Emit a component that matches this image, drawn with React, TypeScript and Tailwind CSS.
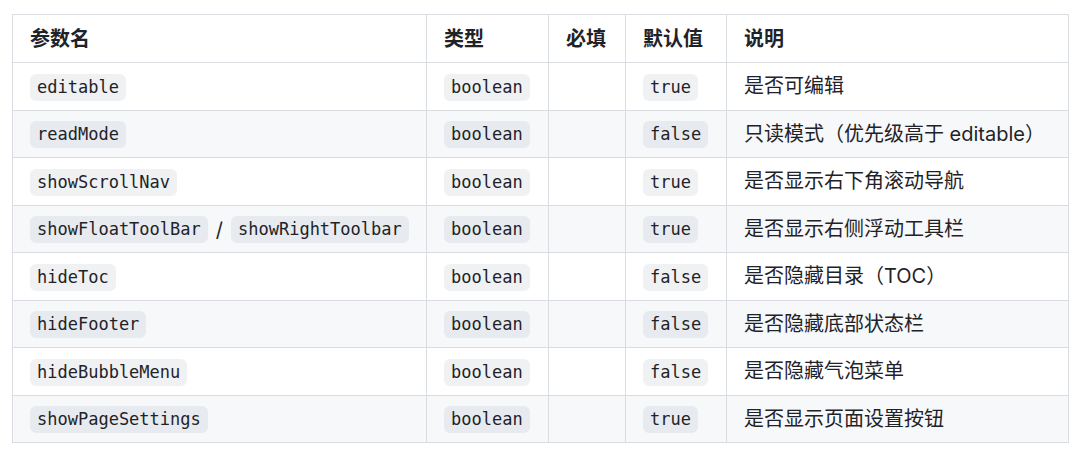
import React from "react";

/* =========================
   Data
   ========================= */
type Row = {
  names: string[];
  type: string;
  required: string;
  def: string;
  desc: string;
};

const rows: Row[] = [
  { names: ["editable"], type: "boolean", required: "", def: "true", desc: "是否可编辑" },
  { names: ["readMode"], type: "boolean", required: "", def: "false", desc: "只读模式（优先级高于 editable）" },
  { names: ["showScrollNav"], type: "boolean", required: "", def: "true", desc: "是否显示右下角滚动导航" },
  {
    names: ["showFloatToolBar", "showRightToolbar"],
    type: "boolean",
    required: "",
    def: "true",
    desc: "是否显示右侧浮动工具栏",
  },
  { names: ["hideToc"], type: "boolean", required: "", def: "false", desc: "是否隐藏目录（TOC）" },
  { names: ["hideFooter"], type: "boolean", required: "", def: "false", desc: "是否隐藏底部状态栏" },
  { names: ["hideBubbleMenu"], type: "boolean", required: "", def: "false", desc: "是否隐藏气泡菜单" },
  { names: ["showPageSettings"], type: "boolean", required: "", def: "true", desc: "是否显示页面设置按钮" },
];

/* =========================
   Inline code chip
   ========================= */
const Code: React.FC<{ children: React.ReactNode }> = ({ children }) => (
  <code className="inline-block rounded-[6px] bg-[#afb8c133] px-[7px] py-[1px] font-['DejaVu_Sans_Mono',monospace] text-[17px] leading-[25px] text-[#1f2328]">
    {children}
  </code>
);

const cell = "border border-[#d9dde2] pl-[17px] pr-[12px] align-middle";

/* =========================
   Props table
   ========================= */
export default function App() {
  return (
    <div className="min-h-[459px] w-[1080px] bg-white pt-[14px] pl-[12px] font-['Inter','Noto_Sans_CJK_SC',sans-serif] text-[20px] text-[#1f2328]">
      <table className="w-[1056px] table-fixed border-collapse">
        <colgroup>
          <col className="w-[414px]" />
          <col className="w-[122px]" />
          <col className="w-[77px]" />
          <col className="w-[101px]" />
          <col className="w-[342px]" />
        </colgroup>
        <thead>
          <tr className="h-[48px] bg-white">
            <th className={`${cell} text-left font-bold`}>参数名</th>
            <th className={`${cell} text-left font-bold`}>类型</th>
            <th className={`${cell} text-left font-bold`}>必填</th>
            <th className={`${cell} text-left font-bold`}>默认值</th>
            <th className={`${cell} text-left font-bold`}>说明</th>
          </tr>
        </thead>
        <tbody>
          {rows.map((r, i) => (
            <tr key={i} className={`h-[47.5px] ${i % 2 === 1 ? "bg-[#f6f8fa]" : "bg-white"}`}>
              <td className={cell}>
                <div className="flex items-center gap-[8px] pt-[2px]">
                  {r.names.map((n, j) => (
                    <React.Fragment key={n}>
                      {j > 0 && <span className="text-[20px]">/</span>}
                      <Code>{n}</Code>
                    </React.Fragment>
                  ))}
                </div>
              </td>
              <td className={cell}>
                <div className="flex items-center pt-[2px]">
                  <Code>{r.type}</Code>
                </div>
              </td>
              <td className={cell}>{r.required}</td>
              <td className={`${cell} pl-[16px]`}>
                <div className="flex items-center pt-[2px]">
                  <Code>{r.def}</Code>
                </div>
              </td>
              <td className={`${cell} whitespace-nowrap`}>{r.desc}</td>
            </tr>
          ))}
        </tbody>
      </table>
    </div>
  );
}
